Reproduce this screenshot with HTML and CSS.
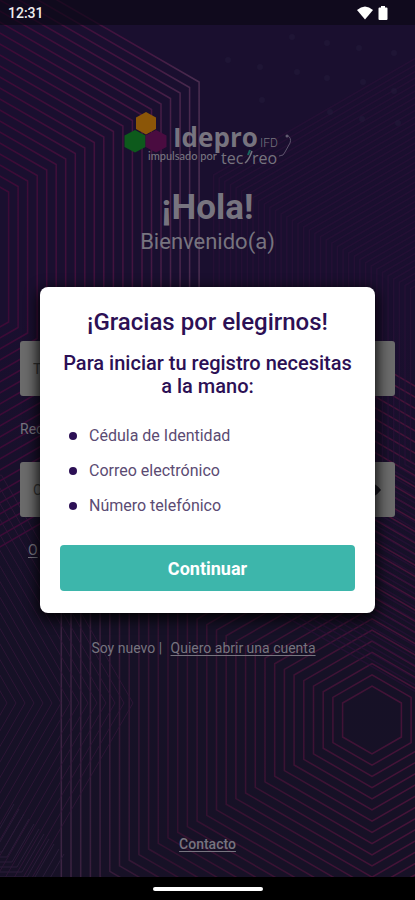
FILE: index.html
```html
<!DOCTYPE html>
<html lang="es">
<head>
<meta charset="utf-8">
<meta name="viewport" content="width=device-width, initial-scale=1">
<title>Idepro IFD</title>
<link rel="stylesheet" href="styles.css">
</head>
<body>
<div class="screen">
  <svg class="pattern" viewBox="0 0 415 900" preserveAspectRatio="xMidYMid slice" aria-hidden="true">
    <defs>
      <linearGradient id="warm" gradientUnits="userSpaceOnUse" x1="0" y1="0" x2="205" y2="0">
        <stop offset="0" stop-color="#3d0a36"/>
        <stop offset="0.7" stop-color="#431540"/>
        <stop offset="1" stop-color="#4b3052"/>
      </linearGradient>
      <linearGradient id="rose" gradientUnits="userSpaceOnUse" x1="60" y1="0" x2="415" y2="0">
        <stop offset="0" stop-color="#3b2442"/>
        <stop offset="0.3" stop-color="#31112f"/>
        <stop offset="1" stop-color="#461338"/>
      </linearGradient>
    </defs>
    <g id="hexes" fill="none"></g>
    <g id="dots" fill="#231b3c"></g>
  </svg>

  <header class="status">
    <span>12:31</span>
    <span class="status-icons">
      <svg width="16" height="14" viewBox="0 0 16 14" aria-hidden="true"><path d="M0 4Q8-3 16 4L8 13.500Z" fill="#fff"/></svg>
      <svg width="10" height="14" viewBox="0 0 10 14" aria-hidden="true"><path d="M3 0h4v1.500h1.500q1 0 1 1V13q0 1-1 1h-7q-1 0-1-1V2.500q0-1 1-1H3Z" fill="#fff"/></svg>
    </span>
  </header>

  <main class="login">
    <svg class="logo" width="172" height="60" viewBox="0 0 172 60" role="img" aria-label="Idepro IFD impulsado por tecreo">
      <path d="M24 2l10 5.500v11.500l-10 5.500-10-5.500V7.500Z" fill="#8b5608"/>
      <path d="M13 20l10.500 5.500v11.500L13 42.500 2.500 37V25.500Z" fill="#0d5a1c"/>
      <path d="M34 20l10.500 5.500v11.500L34 42.500 23.500 37V25.500Z" fill="#4a0c40"/>
      <text class="logo-name" x="51" y="37">Idepro</text>
      <text class="logo-ifd" x="138" y="37">IFD</text>
      <text class="logo-by" x="26" y="50">impulsado por</text>
      <text class="logo-brand" x="99" y="54">tec</text>
      <text class="logo-brand" x="130" y="54">reo</text>
      <path d="M123 53q4-3 7-12" stroke="#77747f" stroke-width="1.500" fill="none"/>
      <path d="M126 45l2-5" stroke="#176a62" stroke-width="2"/>
      <path d="M157 46q5 0 6-4l5-9q2-5-3-8" stroke="#5c546c" fill="none"/>
      <circle cx="165" cy="26" r="1.500" fill="#625b70"/>
    </svg>
    <h1>¡Hola!</h1>
    <p class="welcome">Bienvenido(a)</p>

    <form class="form">
      <input class="field" type="text" placeholder="Tu" aria-label="Usuario">
      <p class="remember">Rec</p>
      <div class="password">
        <input class="field" type="password" placeholder="C" aria-label="Contraseña">
        <svg class="eye" width="26" height="18" viewBox="0 0 26 18" aria-hidden="true"><path d="M0 9Q13-7 26 9 13 25 0 9Z" fill="#17151d"/></svg>
      </div>
      <a class="forgot" href="#">O</a>
    </form>

    <p class="signup">Soy nuevo | <a href="#">Quiero abrir una cuenta</a></p>
    <a class="contact" href="#">Contacto</a>
  </main>

  <footer class="navbar"><span class="handle"></span></footer>

  <div class="overlay">
    <section class="dialog" role="dialog" aria-modal="true" aria-labelledby="dialog-title">
      <h2 id="dialog-title">¡Gracias por elegirnos!</h2>
      <p class="lead">Para iniciar tu registro necesitas a la mano:</p>
      <ul>
        <li>Cédula de Identidad</li>
        <li>Correo electrónico</li>
        <li>Número telefónico</li>
      </ul>
      <button type="button">Continuar</button>
    </section>
  </div>
</div>
<script src="pattern.js"></script>
</body>
</html>
```

FILE: styles.css
```css
* { box-sizing: border-box; }

body {
  margin: 0;
  background: #18102a;
  color: #77747f;
  font-family: Roboto, "Liberation Sans", sans-serif;
}

h1, h2, p, ul { margin: 0; padding: 0; }

.screen {
  position: relative;
  display: flex;
  flex-direction: column;
  min-height: 100vh;
  overflow: hidden;
  background: linear-gradient(#1a0f2f, #1a0f2f 35%, #161126 70%, #171126);
}

.pattern {
  position: absolute;
  inset: 0;
  width: 100%;
  height: 100%;
}

.status, .login, .navbar { position: relative; }

.status {
  display: flex;
  justify-content: space-between;
  align-items: center;
  height: 25px;
  padding: 0 27px 0 8px;
  background: rgba(10, 6, 18, 0.6);
  color: #eee;
  font-size: 14px;
  font-weight: 500;
}

.status-icons { display: flex; gap: 5px; }

.login {
  flex: 1;
  display: flex;
  flex-direction: column;
  align-items: center;
  padding: 85px 20px 24px;
}

.logo { display: block; }
.logo text { fill: #77747f; }
.logo .logo-name { font: 700 26px "Open Sans", sans-serif; }
.logo .logo-ifd { font: 300 12px Roboto, sans-serif; }
.logo .logo-by { font: 500 11px Lato, sans-serif; }
.logo .logo-brand { font: 400 16px "Open Sans", sans-serif; }

h1 {
  margin-top: 17px;
  font-size: 35px;
  line-height: 42px;
}

.welcome { font-size: 22px; line-height: 26px; }

.form {
  display: flex;
  flex-direction: column;
  align-self: stretch;
  margin-top: 86px;
}

.field {
  display: block;
  width: 100%;
  height: 55px;
  padding: 0 13px;
  border: 0;
  border-radius: 3px;
  background: #6b6b6b;
  color: #333;
  font: 14px Roboto, sans-serif;
}

.field::placeholder { color: #303030; }

.remember {
  margin: 24px 0;
  font-size: 14px;
  line-height: 18px;
}

.password { position: relative; }

.eye {
  position: absolute;
  right: 14px;
  top: 19px;
}

.forgot {
  align-self: flex-start;
  margin: 24px 0 0 8px;
  font-size: 14px;
  line-height: 18px;
}

a { color: inherit; text-underline-offset: 2px; }

.signup {
  margin-top: 80px;
  padding-right: 8px;
  font-size: 14px;
  line-height: 18px;
}

.signup a { margin-left: 5px; }

.contact {
  margin-top: auto;
  font-size: 14px;
  font-weight: 500;
  line-height: 18px;
}

.navbar {
  display: flex;
  justify-content: center;
  align-items: center;
  height: 23px;
  background: #000;
}

.handle {
  width: 110px;
  height: 4px;
  border-radius: 2px;
  background: #fff;
}

.overlay {
  position: absolute;
  inset: 0;
  display: flex;
  justify-content: center;
  align-items: center;
  padding: 0 40px;
}

.dialog {
  width: 100%;
  padding: 21px 20px 22px;
  border-radius: 8px;
  background: #fff;
  color: #2c1055;
  text-align: center;
  box-shadow: 0 4px 14px 2px rgba(0, 0, 0, 0.9);
}

h2 {
  font-size: 24px;
  font-weight: 500;
  line-height: 28px;
}

.lead {
  margin-top: 16px;
  font-size: 20px;
  font-weight: 500;
  line-height: 23px;
}

ul {
  margin: 20px 0 22px;
  padding-left: 9px;
  list-style: none;
  text-align: left;
}

li {
  display: flex;
  align-items: center;
  gap: 12px;
  height: 35px;
  color: #5b4b73;
  font-size: 16px;
}

li::before {
  content: "";
  width: 8px;
  height: 8px;
  border-radius: 50%;
  background: #2c1055;
}

button {
  display: block;
  width: 100%;
  height: 46px;
  border: 0;
  border-radius: 4px;
  background: #3db6ab;
  color: #fff;
  font: 700 18px Roboto, sans-serif;
}
```

FILE: pattern.js
```js
const NS = "http://www.w3.org/2000/svg";
const hexes = document.getElementById("hexes");

// Nested hexagons: cx, cy, first radius, radius step, count, rotation in degrees.
function nest(cx, cy, first, step, count, turn, stroke, opacity, width) {
  for (let i = 0; i < count; i++) {
    const r = first + i * step;
    const points = [];
    for (let k = 0; k < 6; k++) {
      const a = (turn + k * 60) * Math.PI / 180;
      points.push((cx + r * Math.cos(a)).toFixed(1) + "," + (cy + r * Math.sin(a)).toFixed(1));
    }
    const p = document.createElementNS(NS, "polygon");
    p.setAttribute("points", points.join(" "));
    p.setAttribute("stroke", stroke);
    p.setAttribute("stroke-width", width);
    p.setAttribute("opacity", opacity);
    hexes.appendChild(p);
  }
}

nest(-104, 257, 130, 11, 21, 30, "url(#warm)", 1, 1.5);
nest(372, 720, 34, 11.2, 30, 30, "url(#rose)", 1, 1.5);
nest(560, 375, 140, 6.5, 41, 30, "#2b1138", 0.6, 1.5);
nest(-130, 703, 110, 9, 18, 0, "#33163a", 0.8, 1);

const dots = document.getElementById("dots");
[[228, 60], [260, 67], [292, 37], [327, 43], [359, 48], [394, 53], [297, 72], [327, 78],
 [363, 82], [394, 91], [262, 100], [330, 112], [362, 119], [398, 123]].forEach(([x, y]) => {
  const c = document.createElementNS(NS, "circle");
  c.setAttribute("cx", x);
  c.setAttribute("cy", y);
  c.setAttribute("r", 3);
  c.setAttribute("opacity", 0.5);
  dots.appendChild(c);
});

// Short bent strokes in the lower left corner.
for (let i = 0; i < 11; i++) {
  const x = -8 + i * 5;
  const y = 842 + i * 5;
  const p = document.createElementNS(NS, "path");
  p.setAttribute("d", `M-5 ${y}H${x}L${x + 22} ${y - 38}`);
  p.setAttribute("stroke", "#2a1c38");
  hexes.appendChild(p);
}
```
